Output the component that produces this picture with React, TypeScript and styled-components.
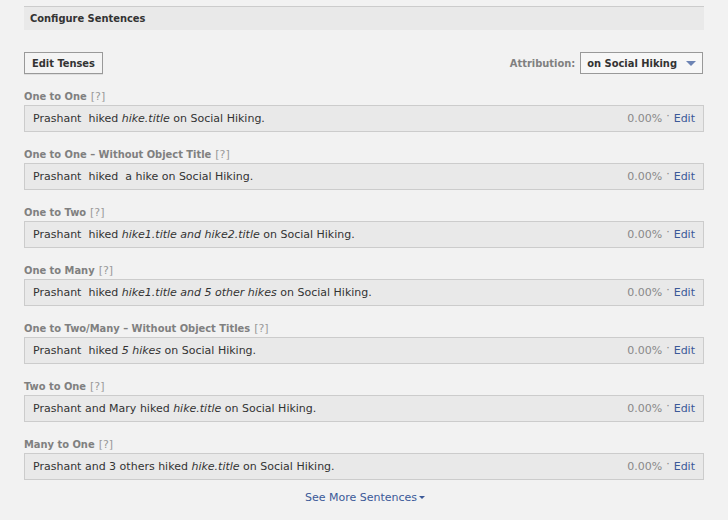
import React from "react";
import styled, { createGlobalStyle } from "styled-components";

const BOLD_FONT = `"DejaVu Sans Condensed", "DejaVu Sans", "Liberation Sans", sans-serif`;

const GlobalStyle = createGlobalStyle`
  html, body {
    margin: 0;
    padding: 0;
    background: #f2f2f2;
  }
  body {
    font-family: "DejaVu Sans", "Liberation Sans", sans-serif;
    font-size: 11px;
    color: #333;
  }
`;

const Page = styled.div`
  width: 728px;
  height: 520px;
  padding: 6px 24px 0 24px;
  box-sizing: border-box;
  overflow: hidden;
`;

const Header = styled.div`
  height: 23px;
  border-top: 1px solid #cccccc;
  background: #e9e9e9;
  display: flex;
  align-items: center;
  padding-left: 6px;
  font-family: ${BOLD_FONT};
  font-weight: bold;
  color: #333;
`;

const Toolbar = styled.div`
  display: flex;
  justify-content: space-between;
  align-items: center;
  margin-top: 22px;
  height: 22px;
`;

const Button = styled.button`
  height: 22px;
  padding: 0 7px;
  border: 1px solid #999;
  background: #f4f4f4;
  box-shadow: 0 1px 0 rgba(0, 0, 0, 0.08);
  font-family: ${BOLD_FONT};
  font-size: 11px;
  font-weight: bold;
  color: #333;
`;

const Attribution = styled.div`
  display: flex;
  align-items: center;
  gap: 5px;
  margin-right: 1px;
`;

const AttrLabel = styled.span`
  color: #808080;
  font-family: ${BOLD_FONT};
  font-weight: bold;
`;

const Select = styled.div`
  height: 20px;
  display: flex;
  align-items: center;
  gap: 9px;
  padding: 0 6px 0 6px;
  border: 1px solid #999;
  background: #f7f7f7;
  font-family: ${BOLD_FONT};
  font-weight: bold;
  color: #333;
`;

const Caret = styled.span`
  width: 0;
  height: 0;
  border-left: 5px solid transparent;
  border-right: 5px solid transparent;
  border-top: 5px solid #6d84b4;
`;

const Sections = styled.div`
  margin-top: 16px;
  display: flex;
  flex-direction: column;
  gap: 16px;
`;

const Section = styled.div`
  display: flex;
  flex-direction: column;
`;

const Label = styled.div`
  height: 15px;
  font-family: ${BOLD_FONT};
  font-weight: bold;
  color: #808080;
  display: flex;
  align-items: flex-start;
  gap: 4px;
`;

const Help = styled.span`
  font-family: "DejaVu Sans", sans-serif;
  font-weight: normal;
  color: #999;
`;

const Row = styled.div`
  height: 25px;
  border: 1px solid #cccccc;
  background: #e9e9e9;
  display: flex;
  align-items: center;
  justify-content: space-between;
  padding: 0 8px 0 8px;
`;

const Sentence = styled.span`
  color: #333;
  white-space: pre;
`;

const Obj = styled.i`
  font-style: italic;
`;

const Stats = styled.span`
  display: flex;
  align-items: center;
  gap: 4px;
`;

const Percent = styled.span`
  color: #888;
`;

const Dot = styled.span`
  color: #888;
  position: relative;
  top: -3px;
`;

const Link = styled.a`
  color: #3b5998;
  text-decoration: none;
  cursor: pointer;
`;

const Footer = styled.div`
  display: flex;
  justify-content: center;
  margin-top: 11px;
`;

const MoreLink = styled(Link)`
  display: flex;
  align-items: center;
  gap: 2px;
  margin-left: 2px;
`;

const SmallCaret = styled.span`
  width: 0;
  height: 0;
  border-left: 3px solid transparent;
  border-right: 3px solid transparent;
  border-top: 3px solid #3b5998;
`;

type Item = { title: string; subject: string; obj: string };

const items: Item[] = [
  { title: "One to One", subject: "Prashant  hiked ", obj: "hike.title" },
  { title: "One to One – Without Object Title", subject: "Prashant  hiked  a hike", obj: "" },
  { title: "One to Two", subject: "Prashant  hiked ", obj: "hike1.title and hike2.title" },
  { title: "One to Many", subject: "Prashant  hiked ", obj: "hike1.title and 5 other hikes" },
  { title: "One to Two/Many – Without Object Titles", subject: "Prashant  hiked ", obj: "5 hikes" },
  { title: "Two to One", subject: "Prashant and Mary hiked ", obj: "hike.title" },
  { title: "Many to One", subject: "Prashant and 3 others hiked ", obj: "hike.title" },
];

const App: React.FC = () => {
  return (
    <Page>
      <GlobalStyle />
      <Header>Configure Sentences</Header>
      <Toolbar>
        <Button>Edit Tenses</Button>
        <Attribution>
          <AttrLabel>Attribution:</AttrLabel>
          <Select>
            on Social Hiking
            <Caret />
          </Select>
        </Attribution>
      </Toolbar>
      <Sections>
        {items.map((it) => (
          <Section key={it.title}>
            <Label>
              {it.title}
              <Help>[?]</Help>
            </Label>
            <Row>
              <Sentence>
                {it.subject}
                {it.obj && <Obj>{it.obj}</Obj>} on Social Hiking.
              </Sentence>
              <Stats>
                <Percent>0.00%</Percent>
                <Dot>·</Dot>
                <Link>Edit</Link>
              </Stats>
            </Row>
          </Section>
        ))}
      </Sections>
      <Footer>
        <MoreLink>
          See More Sentences
          <SmallCaret />
        </MoreLink>
      </Footer>
    </Page>
  );
};

export default App;
